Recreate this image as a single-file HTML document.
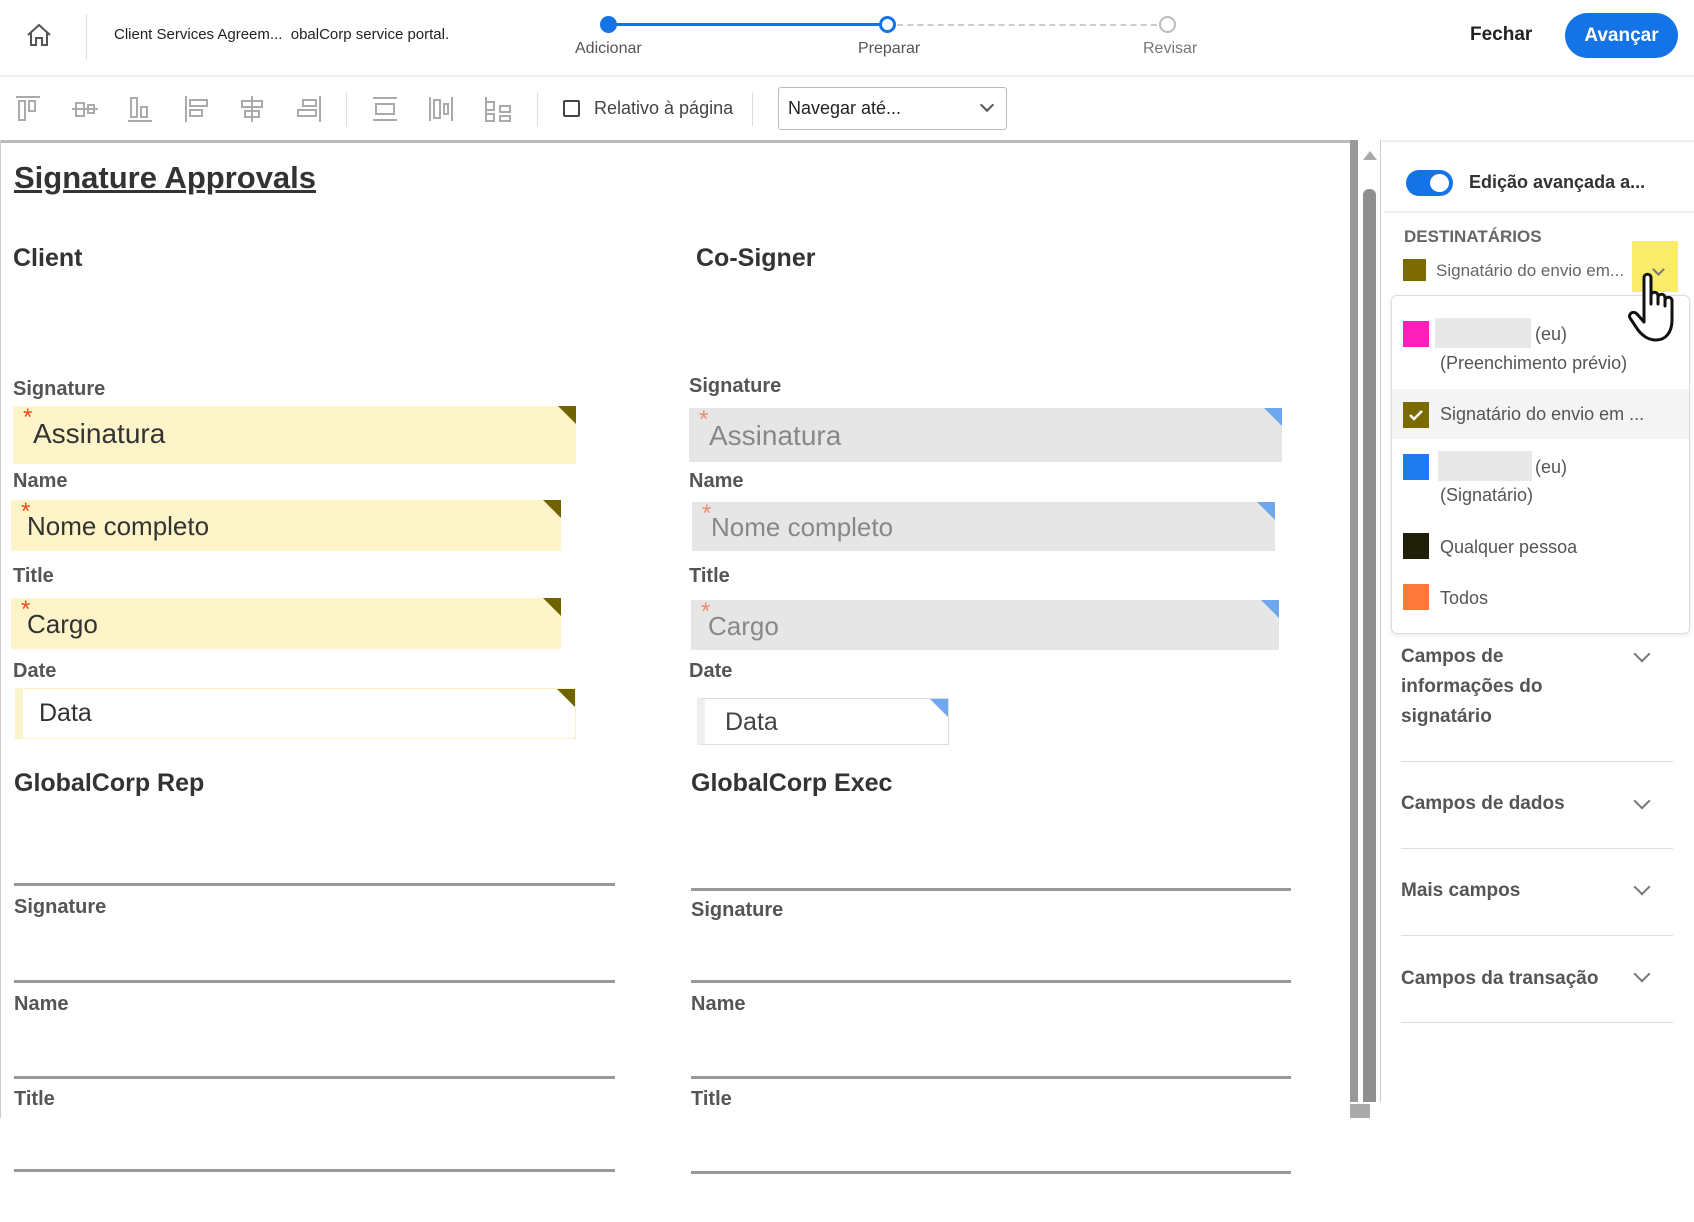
<!DOCTYPE html>
<html><head><meta charset="utf-8"><style>
*{margin:0;padding:0;box-sizing:border-box}
body{width:1694px;height:1222px;background:#fff;position:relative;overflow:hidden;font-family:"Liberation Sans",sans-serif;color:#333}
.a{position:absolute;white-space:nowrap}
.lbl{position:absolute;font-size:20px;font-weight:bold;color:#555}
.h{position:absolute;font-size:25px;font-weight:bold;color:#333}
.f{position:absolute;background:#fdf5c9}
.f .t{position:absolute;left:20px;top:10px;font-size:28px;color:#333;white-space:nowrap}
.f .s{position:absolute;left:10px;top:-2px;color:#f04a1c;font-size:24px}
.tri{position:absolute;right:0;top:0;width:0;height:0;border-top:18px solid #6f6200;border-left:18px solid transparent}
.g{background:#e6e6e6}
.g .t{color:#888}
.g .tri{border-top-color:#6ea7ee}
.g .s{color:#f08a70}
.ln{position:absolute;height:3px;background:#999}
.sec{position:absolute;left:1401px;font-size:19px;font-weight:bold;color:#555;line-height:30px;white-space:nowrap}
.chev{position:absolute;left:1636px;width:12px;height:12px;border-right:2px solid #777;border-bottom:2px solid #777;transform:rotate(45deg)}
.dv{position:absolute;left:1401px;width:272px;height:1px;background:#ddd}
.sw{position:absolute;left:1403px;width:26px;height:26px}
.it{position:absolute;font-size:18px;color:#555;white-space:nowrap}
</style></head><body>
<svg class="a" style="left:25px;top:22px" width="28" height="26" viewBox="0 0 28 26"><path d="M3 13 L14 3 L25 13 M6 11 V23 H11 V16 H17 V23 H22 V11" fill="none" stroke="#555" stroke-width="2"/></svg>
<div class="a" style="left:86px;top:14px;width:1px;height:46px;background:#ddd"></div>
<div class="a" style="left:114px;top:26px;font-size:15px;color:#222">Client Services Agreem...&nbsp; obalCorp service portal.</div>
<div class="a" style="left:608px;top:23px;width:279px;height:3px;background:#1473e6"></div>
<div class="a" style="left:887px;top:24px;width:280px;border-top:2px dashed #ccc"></div>
<div class="a" style="left:600px;top:16px;width:17px;height:17px;border-radius:50%;background:#1473e6"></div>
<div class="a" style="left:879px;top:16px;width:17px;height:17px;border-radius:50%;background:#fff;border:3px solid #1473e6"></div>
<div class="a" style="left:1159px;top:16px;width:17px;height:17px;border-radius:50%;background:#fff;border:2px solid #bbb"></div>
<div class="a" style="left:575px;top:40px;font-size:16px;color:#555">Adicionar</div>
<div class="a" style="left:858px;top:40px;font-size:16px;color:#555">Preparar</div>
<div class="a" style="left:1143px;top:40px;font-size:16px;color:#777">Revisar</div>
<div class="a" style="left:1470px;top:24px;font-size:19px;font-weight:bold;color:#222">Fechar</div>
<div class="a" style="left:1565px;top:13px;width:113px;height:45px;border-radius:23px;background:#1473e6;color:#fff;font-size:19px;font-weight:bold;text-align:center;line-height:45px">Avançar</div>
<div class="a" style="left:0;top:75px;width:1694px;height:2px;background:#eee"></div>
<svg class="a" style="left:14px;top:94px" width="520" height="30" viewBox="0 0 520 30" fill="none" stroke="#aaa" stroke-width="2">
<path d="M2 3H26 M5 7H11V26H5Z M15 7H21V17H15Z"/>
<path d="M58 15H84 M62 9H70V22H62Z M74 11H80V19H74Z"/>
<path d="M114 27H138 M117 4H123V23H117Z M127 13H133V23H127Z"/>
<path d="M172 2V28 M176 6H193V12H176Z M176 16H188V22H176Z"/>
<path d="M238 2V28 M228 7H248V13H228Z M231 17H245V23H231Z"/>
<path d="M306 2V28 M289 6H302V12H289Z M284 16H302V22H284Z"/>
<path d="M359 4H383 M359 26H383 M362 10H380V20H362Z"/>
<path d="M416 3V27 M438 3V27 M420 6H426V24H420Z M430 10H434V20H430Z"/>
<path d="M472 3V27 M472 8H480V16H472Z M486 12H496V18H486Z M486 22H496V27H486Z M472 20H480V27H472Z"/>
</svg>
<div class="a" style="left:346px;top:92px;width:1px;height:34px;background:#ddd"></div>
<div class="a" style="left:537px;top:92px;width:1px;height:34px;background:#ddd"></div>
<div class="a" style="left:563px;top:100px;width:17px;height:17px;border:2px solid #444;border-radius:2px"></div>
<div class="a" style="left:594px;top:98px;font-size:18px;color:#444">Relativo à página</div>
<div class="a" style="left:752px;top:92px;width:1px;height:34px;background:#ddd"></div>
<div class="a" style="left:778px;top:87px;width:229px;height:43px;border:1px solid #bbb;border-radius:3px"></div>
<div class="a" style="left:788px;top:98px;font-size:18px;color:#222">Navegar até...</div>
<div class="a" style="left:982px;top:100px;width:10px;height:10px;border-right:2px solid #555;border-bottom:2px solid #555;transform:rotate(45deg)"></div>
<div class="a" style="left:0;top:140px;width:1356px;height:3px;background:#bbb"></div>
<div class="a" style="left:0;top:140px;width:1px;height:978px;background:#ccc"></div>
<div class="a" style="left:1350px;top:140px;width:8px;height:962px;background:#999"></div>
<div class="a" style="left:1359px;top:140px;width:22px;height:962px;background:#fff;border-right:1px solid #ccc"></div>
<div class="a" style="left:1363px;top:151px;width:0;height:0;border-left:7px solid transparent;border-right:7px solid transparent;border-bottom:9px solid #aaa"></div>
<div class="a" style="left:1363px;top:189px;width:13px;height:913px;background:#8f8f8f;border-radius:6px 6px 0 0"></div>
<div class="a" style="left:1350px;top:1104px;width:20px;height:14px;background:#aaa"></div>
<div class="a" style="left:1382px;top:140px;width:312px;height:2px;background:#eee"></div>
<div class="a" style="left:14px;top:160px;font-size:31px;font-weight:bold;color:#333;text-decoration:underline">Signature Approvals</div>
<div class="h" style="left:13px;top:244px">Client</div>
<div class="h" style="left:696px;top:244px">Co-Signer</div>
<div class="lbl" style="left:13px;top:378px">Signature</div>
<div class="f" style="left:13px;top:406px;width:563px;height:58px"><span class="s">*</span><span class="t" style="top:12px">Assinatura</span><div class="tri"></div></div>
<div class="lbl" style="left:13px;top:470px">Name</div>
<div class="f" style="left:11px;top:500px;width:550px;height:51px"><span class="s">*</span><span class="t" style="left:16px;top:11px;font-size:26px">Nome completo</span><div class="tri"></div></div>
<div class="lbl" style="left:13px;top:565px">Title</div>
<div class="f" style="left:11px;top:598px;width:550px;height:51px"><span class="s">*</span><span class="t" style="left:16px;top:11px;font-size:26px">Cargo</span><div class="tri"></div></div>
<div class="lbl" style="left:13px;top:660px">Date</div>
<div class="f" style="left:15px;top:688px;width:561px;height:51px;background:#fff;border:1px solid #faf0c0;border-left:8px solid #fbf3cc"><span class="t" style="left:16px;top:10px;font-size:25px">Data</span><div class="tri"></div></div>
<div class="lbl" style="left:689px;top:375px">Signature</div>
<div class="f g" style="left:689px;top:408px;width:593px;height:54px"><span class="s">*</span><span class="t" style="top:12px">Assinatura</span><div class="tri"></div></div>
<div class="lbl" style="left:689px;top:470px">Name</div>
<div class="f g" style="left:692px;top:502px;width:583px;height:49px"><span class="s">*</span><span class="t" style="left:19px;top:10px;font-size:26px">Nome completo</span><div class="tri"></div></div>
<div class="lbl" style="left:689px;top:565px">Title</div>
<div class="f g" style="left:691px;top:600px;width:588px;height:50px"><span class="s">*</span><span class="t" style="left:17px;top:11px;font-size:26px">Cargo</span><div class="tri"></div></div>
<div class="lbl" style="left:689px;top:660px">Date</div>
<div class="f g" style="left:697px;top:698px;width:252px;height:47px;background:#fff;border:1px solid #ddd;border-left:8px solid #eee"><span class="t" style="left:20px;top:9px;font-size:25px;color:#444">Data</span><div class="tri"></div></div>
<div class="h" style="left:14px;top:769px">GlobalCorp Rep</div>
<div class="h" style="left:691px;top:769px">GlobalCorp Exec</div>
<div class="ln" style="left:14px;top:883px;width:601px"></div>
<div class="ln" style="left:691px;top:888px;width:600px"></div>
<div class="lbl" style="left:14px;top:896px">Signature</div>
<div class="lbl" style="left:691px;top:899px">Signature</div>
<div class="ln" style="left:14px;top:980px;width:601px"></div>
<div class="ln" style="left:691px;top:980px;width:600px"></div>
<div class="lbl" style="left:14px;top:993px">Name</div>
<div class="lbl" style="left:691px;top:993px">Name</div>
<div class="ln" style="left:14px;top:1076px;width:601px"></div>
<div class="ln" style="left:691px;top:1076px;width:600px"></div>
<div class="lbl" style="left:14px;top:1088px">Title</div>
<div class="lbl" style="left:691px;top:1088px">Title</div>
<div class="ln" style="left:14px;top:1169px;width:601px"></div>
<div class="ln" style="left:691px;top:1171px;width:600px"></div>
<div class="a" style="left:1406px;top:170px;width:47px;height:26px;border-radius:13px;background:#1473e6"></div>
<div class="a" style="left:1430px;top:174px;width:19px;height:18px;border-radius:50%;background:#fff"></div>
<div class="a" style="left:1469px;top:172px;font-size:18px;font-weight:bold;color:#333">Edição avançada a...</div>
<div class="a" style="left:1384px;top:211px;width:310px;height:2px;background:#eee"></div>
<div class="a" style="left:1404px;top:227px;font-size:17px;font-weight:bold;color:#666">DESTINATÁRIOS</div>
<div class="a" style="left:1632px;top:241px;width:46px;height:51px;background:#f8ec6a"></div>
<div class="sw" style="top:259px;width:23px;height:22px;background:#7a6a00"></div>
<div class="it" style="left:1436px;top:261px;color:#666;font-size:17px;width:188px;overflow:hidden">Signatário do envio em...</div>
<div class="a" style="left:1654px;top:265px;width:9px;height:9px;border-right:2px solid #777;border-bottom:2px solid #777;transform:rotate(45deg)"></div>
<div class="a" style="left:1391px;top:295px;width:299px;height:339px;border:1px solid #ddd;border-radius:6px;background:#fff;box-shadow:0 1px 4px rgba(0,0,0,.1)"></div>
<div class="sw" style="top:321px;background:#ff1fba"></div>
<div class="a" style="left:1435px;top:318px;width:96px;height:30px;background:#e8e8e8"></div>
<div class="it" style="left:1535px;top:324px">(eu)</div>
<div class="it" style="left:1440px;top:353px">(Preenchimento prévio)</div>
<div class="a" style="left:1392px;top:389px;width:297px;height:50px;background:#f4f4f4"></div>
<div class="sw" style="top:402px;background:#7a6a00"></div>
<svg class="a" style="left:1406px;top:406px" width="20" height="18"><path d="M4 9 L8 13 L16 5" fill="none" stroke="#fff" stroke-width="2.5"/></svg>
<div class="it" style="left:1440px;top:404px">Signatário do envio em ...</div>
<div class="sw" style="top:454px;background:#1e7bf0"></div>
<div class="a" style="left:1438px;top:451px;width:94px;height:30px;background:#e8e8e8"></div>
<div class="it" style="left:1535px;top:457px">(eu)</div>
<div class="it" style="left:1440px;top:485px">(Signatário)</div>
<div class="sw" style="top:533px;background:#1f1f0a"></div>
<div class="it" style="left:1440px;top:537px">Qualquer pessoa</div>
<div class="sw" style="top:584px;background:#ff7a3a"></div>
<div class="it" style="left:1440px;top:588px">Todos</div>
<svg class="a" style="left:1628px;top:272px" width="62" height="74" viewBox="0 0 62 74"><path d="M16 6 C16 1 23 1 23 6 V32 V24 C23 19 30 19 30 24 V32 V26 C30 21 37 21 37 26 V34 V29 C37 24 44 24 44 29 V48 C44 60 38 68 28 68 C20 68 15 64 10 58 L2 46 C0 42 5 38 9 42 L16 50 Z" fill="#fff" stroke="#111" stroke-width="3" stroke-linejoin="round"/></svg>
<div class="sec" style="top:642px">Campos de<br>informações do<br>signatário</div>
<div class="chev" style="top:648px"></div>
<div class="dv" style="top:761px"></div>
<div class="sec" style="top:789px">Campos de dados</div>
<div class="chev" style="top:795px"></div>
<div class="dv" style="top:848px"></div>
<div class="sec" style="top:876px">Mais campos</div>
<div class="chev" style="top:881px"></div>
<div class="dv" style="top:935px"></div>
<div class="sec" style="top:964px">Campos da transação</div>
<div class="chev" style="top:968px"></div>
<div class="dv" style="top:1022px"></div>
</body></html>
